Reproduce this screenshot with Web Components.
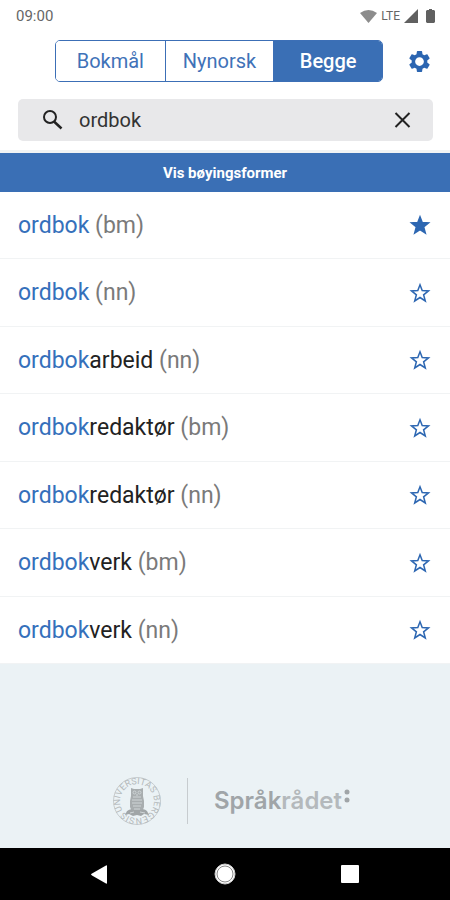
<!DOCTYPE html>
<html lang="nb">
<head>
<meta charset="utf-8">
<meta name="viewport" content="width=device-width, initial-scale=1">
<title>Ordbøkene</title>
<style>
  body {
    margin: 0;
    font-family: Roboto, sans-serif;
    background: #ebf2f5;
  }
</style>
</head>
<body>
<dictionary-app></dictionary-app>

<script>
const RESULTS = [
  { rest: "", lang: "bm", saved: true },
  { rest: "", lang: "nn" },
  { rest: "arbeid", lang: "nn" },
  { rest: "redaktør", lang: "bm" },
  { rest: "redaktør", lang: "nn" },
  { rest: "verk", lang: "bm" },
  { rest: "verk", lang: "nn" }
];

class StatusBar extends HTMLElement {
  constructor() {
    super();
    this.attachShadow({ mode: "open" });
  }

  static get styles() {
    return /* css */`
      :host {
        display: flex;
        justify-content: space-between;
        align-items: center;
        height: 32px;
        padding: 0 15px 0 16px;
        color: #666;
        font-size: 15px;
      }

      .icons {
        display: flex;
        align-items: center;
        gap: 4px;
        font-size: 12px;
      }

      .battery {
        margin-left: 4px;
      }
    `;
  }

  connectedCallback() {
    this.shadowRoot.innerHTML = /* html */`
    <style>${StatusBar.styles}</style>
    <slot></slot>
    <div class="icons">
      <svg width="17" height="13" viewBox="0 0 17 13" aria-hidden="true"><path fill="#8c8c8c" d="M8.500 13L0 3Q8.500-3 17 3Z"/></svg>
      <span>LTE</span>
      <svg width="14" height="14" viewBox="0 0 14 14" aria-hidden="true"><path fill="#606060" d="M14 0V14H0Z"/></svg>
      <svg class="battery" width="9" height="14" viewBox="0 0 9 14" aria-hidden="true"><path fill="#606060" d="M3 0h3v1h2l1 1v11l-1 1H1l-1-1V2l1-1h2z"/></svg>
    </div>`;
  }
}

class LanguageToggle extends HTMLElement {
  constructor() {
    super();
    this.attachShadow({ mode: "open" });
  }

  static get styles() {
    return /* css */`
      :host {
        display: block;
      }

      .group {
        display: grid;
        grid-template-columns: repeat(3, 1fr);
        border: 1px solid #3c6fb6;
        border-radius: 5px;
        overflow: hidden;
      }

      button {
        height: 40px;
        padding: 0;
        border: 0;
        border-left: 1px solid #3c6fb6;
        background: #fff;
        color: #3f72b8;
        font: 400 20px Roboto, sans-serif;
      }

      button:first-child {
        border-left: 0;
      }

      button[aria-pressed="true"] {
        background: #3a6fb5;
        color: #fff;
        font-weight: 500;
      }
    `;
  }

  select(button) {
    this.shadowRoot.querySelectorAll("button").forEach(item => {
      item.setAttribute("aria-pressed", item === button);
    });
  }

  connectedCallback() {
    this.shadowRoot.innerHTML = /* html */`
    <style>${LanguageToggle.styles}</style>
    <div class="group" role="group">
      <button type="button" aria-pressed="false">Bokmål</button>
      <button type="button" aria-pressed="false">Nynorsk</button>
      <button type="button" aria-pressed="true">Begge</button>
    </div>`;
    this.shadowRoot.addEventListener("click", ev => {
      const button = ev.target.closest("button");
      if (button) this.select(button);
    });
  }
}

class SearchField extends HTMLElement {
  constructor() {
    super();
    this.attachShadow({ mode: "open" });
  }

  static get styles() {
    return /* css */`
      :host {
        display: flex;
        align-items: center;
        height: 42px;
        padding: 0 16px 0 24px;
        border-radius: 5px;
        background: #e8e8ea;
        color: #222;
      }

      label, button {
        display: flex;
      }

      input {
        flex: 1;
        min-width: 0;
        margin-left: 16px;
        padding: 0;
        border: 0;
        outline: 0;
        background: none;
        color: #333;
        font: 400 20px Roboto, sans-serif;
      }

      button {
        padding: 0;
        border: 0;
        background: none;
        color: inherit;
      }
    `;
  }

  connectedCallback() {
    this.shadowRoot.innerHTML = /* html */`
    <style>${SearchField.styles}</style>
    <label for="query" aria-label="Søk">
      <svg width="21" height="20" viewBox="0 0 21 20" fill="none" stroke="currentColor" stroke-width="2"><circle cx="8" cy="7" r="6"/><path d="M12 11.500L19.500 18.500" stroke-width="2.500"/></svg>
    </label>
    <input id="query" type="text" value="ordbok">
    <button type="button" aria-label="Tøm">
      <svg width="29" height="29" viewBox="0 0 29 29" fill="none" stroke="currentColor" stroke-width="2"><path d="M7.500 7L21.500 21M21.500 7L7.500 21"/></svg>
    </button>`;
    const input = this.shadowRoot.querySelector("input");
    this.shadowRoot.querySelector("button").addEventListener("click", () => {
      input.value = "";
      input.focus();
    });
  }
}

class WordRow extends HTMLElement {
  constructor() {
    super();
    this.attachShadow({ mode: "open" });
  }

  static get styles() {
    return /* css */`
      :host {
        display: flex;
        align-items: center;
        justify-content: space-between;
        box-sizing: border-box;
        padding: 0 18px;
        border-bottom: 1px solid #f1f3f4;
        background: #fff;
        font-size: 23px;
      }

      a {
        color: #222;
        text-decoration: none;
      }

      button {
        display: flex;
        padding: 0;
        border: 0;
        background: none;
        color: #2d67b2;
      }

      path {
        fill: none;
        stroke: currentColor;
        stroke-width: 1.5;
      }

      :host([saved]) path {
        fill: currentColor;
      }
    `;
  }

  connectedCallback() {
    this.shadowRoot.innerHTML = /* html */`
    <style>${WordRow.styles}</style>
    <a href="#"><slot></slot></a>
    <button type="button" aria-label="Favoritt">
      <svg width="24" height="24" viewBox="0 0 24 24"><path d="M12 3.800L14.200 9.600L20.500 9.900L15.600 13.800L17.300 20L12 16.500L6.700 20L8.400 13.800L3.500 9.900L9.800 9.600Z"/></svg>
    </button>`;
    this.shadowRoot.querySelector("button").addEventListener("click", () => {
      this.toggleAttribute("saved");
    });
  }
}

class WordList extends HTMLElement {
  constructor() {
    super();
    this.attachShadow({ mode: "open" });
  }

  static get styles() {
    return /* css */`
      :host {
        display: grid;
        grid-auto-rows: 67px 68px;
      }

      .hit {
        color: #3570bb;
      }

      .lang {
        color: #7a7a7a;
      }
    `;
  }

  connectedCallback() {
    this.shadowRoot.innerHTML = /* html */`
    <style>${WordList.styles}</style>
    ${RESULTS.map(({ rest, lang, saved }) => /* html */`
      <word-row ${saved ? "saved" : ""}><span class="hit">ordbok</span>${rest} <span class="lang">(${lang})</span></word-row>
    `).join("")}`;
  }
}

class OwnerLogos extends HTMLElement {
  constructor() {
    super();
    this.attachShadow({ mode: "open" });
  }

  static get styles() {
    return /* css */`
      :host {
        display: flex;
        align-items: center;
        justify-content: center;
        gap: 26px;
        padding: 0 0 23px 13px;
        color: #a0a5a8;
      }

      .line {
        width: 1px;
        height: 46px;
        background: #c7cccf;
      }

      .name {
        display: flex;
        align-items: center;
        gap: 2px;
        font: 600 24px Inter, sans-serif;
        line-height: 28px;
      }

      .name span span {
        color: #b4b9bc;
      }

      .name svg {
        margin-bottom: 10px;
      }

      .seal text {
        font: 9px Roboto, sans-serif;
        fill: #b4b9bb;
      }
    `;
  }

  connectedCallback() {
    this.shadowRoot.innerHTML = /* html */`
    <style>${OwnerLogos.styles}</style>
    <svg class="seal" width="48" height="48" viewBox="0 0 48 48" fill="none">
      <circle cx="24" cy="24" r="23.500" stroke="#c6cccf"/>
      <path id="ring" d="M9.800 33.500A17 17 0 1 1 38.200 33.500A17 17 0 0 1 9.800 33.500"/>
      <text><textPath href="#ring">UNIVERSITAS BERGENSIS</textPath></text>
      <!-- owl -->
      <path fill="#a8adaf" d="M18 11l3 1h6l3-1v8l1 5v6l-2 5H19l-2-5v-6l1-5z"/>
      <path fill="#a0a5a7" d="M14 34q4-3 6-1h8q3-2 6 1l2 4-5-1-3 2-4-1-4 1-4-2-4 1z"/>
      <g stroke="#cfd5d7">
        <circle cx="21.500" cy="15.500" r="1.500"/>
        <circle cx="26.500" cy="15.500" r="1.500"/>
        <path d="M20 20h8M19 23h10M19 26h10M20 29h8M21 32h6M24 17v2M17 36l4-1M27 35l5 1"/>
      </g>
    </svg>
    <div class="line"></div>
    <div class="name">
      <span>Språk<span>rådet</span></span>
      <svg width="6" height="14" viewBox="0 0 6 14" fill="currentColor"><circle cx="3" cy="3" r="2.500"/><circle cx="3" cy="11" r="2.500"/></svg>
    </div>`;
  }
}

class NavigationBar extends HTMLElement {
  constructor() {
    super();
    this.attachShadow({ mode: "open" });
  }

  static get styles() {
    return /* css */`
      :host {
        display: flex;
        justify-content: center;
        gap: 101px;
        padding: 14px 0;
        background: #000;
      }

      button {
        display: flex;
        padding: 0;
        border: 0;
        background: none;
      }
    `;
  }

  connectedCallback() {
    this.shadowRoot.innerHTML = /* html */`
    <style>${NavigationBar.styles}</style>
    <button type="button" aria-label="Tilbake">
      <svg width="24" height="24" viewBox="0 0 24 24" fill="#fff"><path d="M3 12.500Q3 12 4 11.500L18 3.500Q19 3 19 4V21Q19 22 18 21.500L4 13.500Z"/></svg>
    </button>
    <button type="button" aria-label="Hjem">
      <svg width="24" height="24" viewBox="0 0 24 24" fill="#fff"><circle cx="12" cy="12" r="10" stroke="#ccc"/><circle cx="12" cy="12" r="8" stroke="#888"/></svg>
    </button>
    <button type="button" aria-label="Oversikt">
      <svg width="24" height="24" viewBox="0 0 24 24" fill="#fff"><rect x="3" y="3" width="18" height="18" rx="1"/></svg>
    </button>`;
  }
}

class DictionaryApp extends HTMLElement {
  constructor() {
    super();
    this.attachShadow({ mode: "open" });
  }

  static get styles() {
    return /* css */`
      :host {
        display: flex;
        flex-direction: column;
        min-height: 100vh;
      }

      header {
        padding-bottom: 9px;
        border-bottom: 3px solid #f0f3f4;
        background: #fff;
      }

      .tools {
        display: flex;
        align-items: center;
        padding: 8px 18px 0 55px;
        gap: 24px;
      }

      language-toggle {
        flex: 1;
      }

      search-field {
        margin: 17px 17px 0 18px;
      }

      button {
        padding: 0;
        border: 0;
        background: none;
      }

      .settings {
        display: flex;
        color: #2b65b1;
      }

      .forms {
        height: 39px;
        background: #3a6fb5;
        color: #fff;
        font: 700 15px Roboto, sans-serif;
      }

      owner-logos {
        margin-top: auto;
      }
    `;
  }

  connectedCallback() {
    this.shadowRoot.innerHTML = /* html */`
    <style>${DictionaryApp.styles}</style>
    <header>
      <status-bar>09:00</status-bar>
      <div class="tools">
        <language-toggle></language-toggle>
        <button class="settings" type="button" aria-label="Innstillinger">
          <svg width="25" height="25" viewBox="0 0 24 24" fill="currentColor"><path fill-rule="evenodd" d="M19.430 12.980c.04-.32.07-.64.07-.98s-.03-.66-.07-.98l2.110-1.650c.19-.15.24-.42.12-.64l-2-3.460c-.12-.22-.39-.3-.61-.22l-2.490 1c-.52-.4-1.080-.73-1.690-.98l-.38-2.650C14.460 2.180 14.250 2 14 2h-4c-.25 0-.46.18-.49.42l-.38 2.650c-.61.25-1.170.59-1.690.98l-2.490-1c-.23-.09-.49 0-.61.22l-2 3.460c-.13.22-.07.49.12.64l2.110 1.650c-.04.32-.07.65-.07.98s.03.66.07.98l-2.110 1.650c-.19.15-.24.42-.12.64l2 3.460c.12.22.39.3.61.22l2.490-1c.52.4 1.080.73 1.690.98l.38 2.650c.03.24.24.42.49.42h4c.25 0 .46-.18.49-.42l.38-2.650c.61-.25 1.170-.59 1.690-.98l2.490 1c.23.09.49 0 .61-.22l2-3.460c.12-.22.07-.49-.12-.64zM12 16.200a4.200 4.200 0 1 1 0-8.400 4.200 4.200 0 0 1 0 8.400z"/></svg>
        </button>
      </div>
      <search-field></search-field>
    </header>
    <button class="forms" type="button">Vis bøyingsformer</button>
    <word-list></word-list>
    <owner-logos></owner-logos>
    <navigation-bar></navigation-bar>`;
  }
}

customElements.define("status-bar", StatusBar);
customElements.define("language-toggle", LanguageToggle);
customElements.define("search-field", SearchField);
customElements.define("word-row", WordRow);
customElements.define("word-list", WordList);
customElements.define("owner-logos", OwnerLogos);
customElements.define("navigation-bar", NavigationBar);
customElements.define("dictionary-app", DictionaryApp);
</script>
</body>
</html>
